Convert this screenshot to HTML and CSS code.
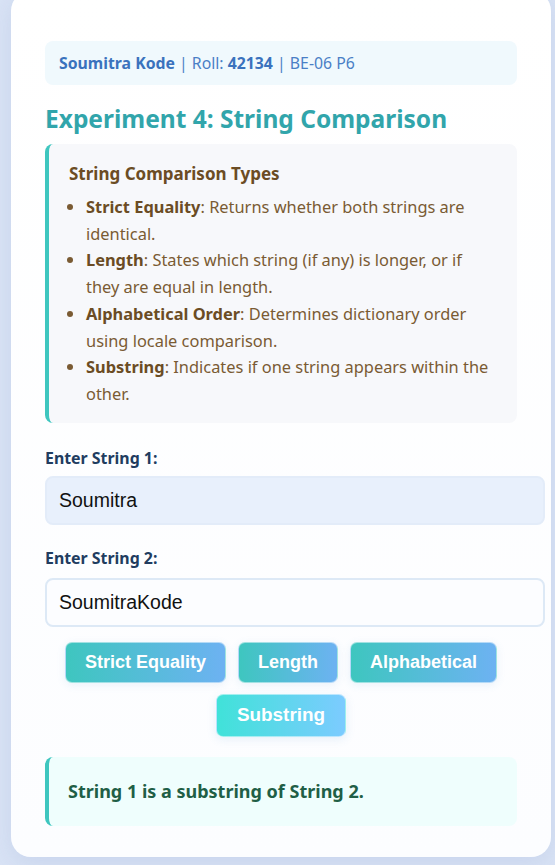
FILE: index.html
```html
<!DOCTYPE html>
<html lang="en">
<head>
<meta charset="utf-8">
<title>Experiment 4: String Comparison</title>
<link rel="stylesheet" href="styles.css">
</head>
<body>
<main class="card">
  <div class="student">
    <b>Soumitra Kode</b> | Roll: <b>42134</b> | BE-06 P6
  </div>
  <h1 class="title">Experiment 4: String Comparison</h1>
  <section class="info">
    <h2 class="info-title">String Comparison Types</h2>
    <ul class="info-list">
      <li><b>Strict Equality</b>: Returns whether both strings are identical.</li>
      <li><b>Length</b>: States which string (if any) is longer, or if they are equal in length.</li>
      <li><b>Alphabetical Order</b>: Determines dictionary order using locale comparison.</li>
      <li><b>Substring</b>: Indicates if one string appears within the other.</li>
    </ul>
  </section>
  <label class="label" for="s1">Enter String 1:</label>
  <input class="field field-filled" id="s1" type="text" value="Soumitra">
  <label class="label" for="s2">Enter String 2:</label>
  <input class="field" id="s2" type="text" value="SoumitraKode">
  <div class="buttons">
    <button class="btn">Strict Equality</button>
    <button class="btn">Length</button>
    <button class="btn">Alphabetical</button>
    <button class="btn btn-active">Substring</button>
  </div>
  <div class="result">String 1 is a substring of String 2.</div>
</main>
</body>
</html>
```

FILE: styles.css
```css
* { box-sizing: border-box; }

html, body {
  margin: 0;
  padding: 0;
}

body {
  background: #d9e3f5;
  font-family: "Noto Sans", "Open Sans", sans-serif;
  height: 865px;
  overflow: hidden;
}

.card {
  width: 540px;
  margin: -9px 0 0 11px;
  padding: 50px 34px 31px;
  background: linear-gradient(180deg, #ffffff 0%, #fcfdff 100%);
  border-radius: 20px;
  box-shadow: 0 6px 24px rgba(120, 145, 200, 0.18);
}

.student {
  background: #f0f9fd;
  border-radius: 8px;
  padding: 11px 14px;
  font-size: 15.8px;
  line-height: 22px;
  color: #4a7fc6;
}

.student b {
  color: #3a72bd;
  font-weight: 700;
}

.title {
  margin: 18px 0 9px;
  font-size: 24.5px;
  line-height: 32px;
  font-weight: 700;
  color: #31a5ab;
}

.info {
  background: #f7f8fb;
  border-left: 4px solid #3ec6bf;
  border-radius: 8px;
  padding: 18px 24px 15px 20px;
  color: #7a5b33;
}

.info-title {
  margin: 0 0 8px;
  font-size: 17px;
  line-height: 24px;
  font-weight: 700;
  color: #6b4c24;
}

.info-list {
  margin: 0;
  padding-left: 17px;
  font-size: 16.4px;
  line-height: 26.7px;
}

.info-list b {
  color: #6b4c24;
}

.label {
  display: block;
  margin: 24px 0 7px;
  font-size: 15.9px;
  line-height: 22px;
  font-weight: 700;
  color: #213c5f;
}

.field + .label {
  margin-top: 22px;
  margin-bottom: 9px;
}

.field {
  display: block;
  width: 100%;
  box-sizing: content-box;
  padding: 11.5px 12px;
  border: 2px solid #dde9f6;
  border-radius: 8px;
  background: #fcfdff;
  font-family: "Liberation Sans", Arial, sans-serif;
  font-size: 19.5px;
  line-height: 22px;
  color: #111;
  outline: none;
}

.field-filled {
  background: #e8f0fc;
  border-color: #e3ecf9;
}

.buttons {
  display: flex;
  flex-wrap: wrap;
  justify-content: center;
  gap: 12px 12px;
  margin: 15px 0 21px;
}

.btn {
  border: 1px solid rgba(255, 255, 255, 0.5);
  border-radius: 7px;
  padding: 9px 19px;
  font-family: "Liberation Sans", Arial, sans-serif;
  font-size: 18px;
  line-height: 21px;
  font-weight: 700;
  color: #ffffff;
  background: linear-gradient(90deg, #3ec6bf 0%, #6db2f2 100%);
  box-shadow: 0 2px 8px rgba(90, 160, 210, 0.12);
  cursor: pointer;
}

.btn-active {
  background: linear-gradient(90deg, #40e2d9 0%, #7ccbff 100%);
  transform: scale(1.05);
}

.result {
  background: #effefd;
  border-left: 4px solid #3ec6bf;
  border-radius: 8px;
  padding: 22px 20px 22px 19px;
  font-size: 18px;
  line-height: 25px;
  font-weight: 700;
  color: #1f5f46;
}
```
